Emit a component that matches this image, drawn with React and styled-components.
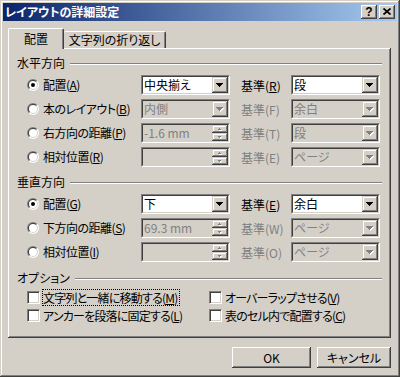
import React from "react"
import styled, { createGlobalStyle } from "styled-components"

const GlobalStyle = createGlobalStyle`
  html, body {
    margin: 0;
    padding: 0;
    background: #d4d0c8;
  }
  body {
    font-family: "Noto Sans CJK JP", "Liberation Sans", sans-serif;
    font-size: 12px;
    font-feature-settings: "palt";
    color: #000;
  }
  * {
    box-sizing: border-box;
  }
`

const raised = `
  box-shadow: inset -1px -1px #404040, inset 1px 1px #fff,
    inset -2px -2px #808080, inset 2px 2px #d4d0c8;
`

const Window = styled.div`
  width: 400px;
  height: 377px;
  padding: 3px;
  background: #d4d0c8;
  box-shadow: inset -1px -1px #404040, inset 1px 1px #d4d0c8,
    inset -2px -2px #808080, inset 2px 2px #fff;
  display: flex;
  flex-direction: column;
`

const TitleBar = styled.div`
  height: 18px;
  display: flex;
  align-items: center;
  padding: 0 2px;
  background: linear-gradient(to right, #0a246a, #a6caf0);
  color: #fff;
  font-weight: bold;
  font-size: 12px;
`

const Title = styled.span`
  flex: 1;
  white-space: nowrap;
  line-height: 18px;
`

const CaptionButton = styled.div`
  width: 16px;
  height: 14px;
  margin-left: ${p => p.$gap || 0}px;
  background: #d4d0c8;
  ${raised}
  display: flex;
  align-items: center;
  justify-content: center;
  color: #000;
  font-family: "Liberation Sans", sans-serif;
  font-size: 12px;
  font-weight: bold;
  line-height: 14px;
  padding-bottom: 1px;
`

const Body = styled.div`
  flex: 1;
  display: flex;
  flex-direction: column;
  padding: 7px 6px 0 5px;
`

const Tabs = styled.div`
  display: flex;
  height: 21px;
  margin-bottom: -1px;
  position: relative;
  z-index: 1;
`

const Tab = styled.div`
  width: ${p => p.$width}px;
  height: ${p => (p.$active ? 21 : 17)}px;
  margin-top: ${p => (p.$active ? 0 : 3)}px;
  padding-top: ${p => (p.$active ? 3 : 1)}px;
  text-align: center;
  line-height: 14px;
  white-space: nowrap;
  background: #d4d0c8;
  border-top: 1px solid #fff;
  border-left: ${p => (p.$active ? "1px solid #fff" : "none")};
  border-right: 1px solid #404040;
  border-radius: 2px 2px 0 0;
  box-shadow: inset -1px 0 #808080;
`

const Panel = styled.div`
  height: 290px;
  padding: 8px 9px 0 9px;
  box-shadow: inset -1px -1px #404040, inset 1px 1px #fff, inset -2px -2px #808080;
  display: flex;
  flex-direction: column;
`

const GroupHead = styled.div`
  display: flex;
  align-items: center;
  height: 14px;
  gap: 5px;
  margin-top: ${p => p.$top || 0}px;
  line-height: 14px;
  white-space: nowrap;

  &::after {
    content: "";
    flex: 1;
    margin-top: 1px;
    border-top: 1px solid #808080;
    border-bottom: 1px solid #fff;
  }
`

const Rows = styled.div`
  display: flex;
  flex-direction: column;
  gap: 4px;
  margin-top: 5px;
  padding-left: 10px;
`

const Row = styled.div`
  display: grid;
  grid-template-columns: 114px 89px 61px 89px;
  align-items: center;
  height: 20px;
`

const Choice = styled.div`
  display: flex;
  align-items: center;
  gap: 4px;
  white-space: nowrap;
  line-height: 14px;
  letter-spacing: -0.5px;
`

const RefLabel = styled.div`
  padding-left: 11px;
  white-space: nowrap;
  color: ${p => (p.$disabled ? "#808080" : "#000")};
`

const Sunken = styled.div`
  width: 89px;
  height: 20px;
  border: 1px solid;
  border-color: #808080 #fff #fff #808080;
`

const FieldInner = styled.div`
  height: 18px;
  display: flex;
  border: 1px solid;
  border-color: #404040 #d4d0c8 #d4d0c8 #404040;
  background: ${p => (p.$disabled ? "#d4d0c8" : "#fff")};
`

const FieldText = styled.div`
  flex: 1;
  padding-left: 1px;
  line-height: 16px;
  white-space: nowrap;
  overflow: hidden;
  color: ${p => (p.$disabled ? "#808080" : "#000")};
`

const DropBtn = styled.div`
  width: 16px;
  height: 16px;
  background: #d4d0c8;
  box-shadow: inset -1px -1px #404040, inset 1px 1px #d4d0c8,
    inset -2px -2px #808080, inset 2px 2px #fff;
  display: flex;
  align-items: center;
  justify-content: center;
  padding-top: 1px;
`

const SpinCol = styled.div`
  width: 16px;
  display: flex;
  flex-direction: column;
`

const SpinBtn = styled.div`
  height: 8px;
  background: #d4d0c8;
  box-shadow: inset -1px -1px #404040, inset 1px 1px #d4d0c8,
    inset -2px -2px #808080, inset 2px 2px #fff;
  display: flex;
  align-items: center;
  justify-content: center;
`

const Checks = styled.div`
  display: grid;
  grid-template-columns: 182px auto;
  grid-auto-rows: 17px;
  row-gap: 1px;
  margin-top: 4px;
  padding-left: 10px;
`

const CheckItem = styled.div`
  display: flex;
  align-items: center;
  white-space: nowrap;
`

const CheckBox = styled.span`
  width: 13px;
  height: 13px;
  margin-right: 2px;
  border: 1px solid;
  border-color: #808080 #fff #fff #808080;
  box-shadow: inset 1px 1px #404040, inset -1px -1px #d4d0c8;
  background: #fff;
`

const CheckText = styled.span`
  line-height: 15px;
  padding: 0 2px 0 0;
  letter-spacing: -0.8px;
  border: 1px ${p => (p.$focus ? "dotted #000" : "solid transparent")};
`

const Buttons = styled.div`
  display: flex;
  justify-content: flex-end;
  gap: 6px;
  margin-top: 9px;
`

const PushButton = styled.div`
  width: ${p => p.$width}px;
  height: 21px;
  background: #d4d0c8;
  ${raised}
  display: flex;
  align-items: center;
  justify-content: center;
  line-height: 14px;
`

const Arrow = ({ up, size = 4, disabled }) => {
  const w = size * 2 - 1
  const rows = (dx, dy, fill) =>
    Array.from({ length: size }, (_, i) => {
      const r = up ? size - 1 - i : i
      return <rect key={fill + i} x={r + dx} y={i + dy} width={w - 2 * r} height={1} fill={fill} />
    })
  return (
    <svg width={w + 1} height={size + 1} shapeRendering="crispEdges">
      {disabled && rows(1, 1, "#fff")}
      {rows(0, 0, disabled ? "#808080" : "#000")}
    </svg>
  )
}

// half disc from bottom-left to top-right, through top-left (or the reverse)
const halfDisc = (r, fill, reverse) => {
  const k = r * 0.7071
  const a = `${6 - k} ${6 + k}`
  const b = `${6 + k} ${6 - k}`
  return <path key={fill + r} d={reverse ? `M${b}A${r} ${r} 0 0 1 ${a}Z` : `M${a}A${r} ${r} 0 0 1 ${b}Z`} fill={fill} />
}

const Radio = ({ checked }) => (
  <svg width="12" height="12" viewBox="0 0 12 12">
    {halfDisc(6, "#808080")}
    {halfDisc(6, "#fff", true)}
    {halfDisc(5, "#404040")}
    {halfDisc(5, "#d4d0c8", true)}
    <circle cx="6" cy="6" r="4" fill="#fff" />
    {checked && <circle cx="6" cy="6" r="2" fill="#000" />}
  </svg>
)

const Combo = ({ value, disabled }) => (
  <Sunken>
    <FieldInner $disabled={disabled}>
      <FieldText $disabled={disabled}>{value}</FieldText>
      <DropBtn>
        <Arrow disabled={disabled} />
      </DropBtn>
    </FieldInner>
  </Sunken>
)

const Spin = ({ value }) => (
  <Sunken>
    <FieldInner $disabled>
      <FieldText $disabled>{value}</FieldText>
      <SpinCol>
        <SpinBtn>
          <Arrow up size={2} disabled />
        </SpinBtn>
        <SpinBtn>
          <Arrow size={2} disabled />
        </SpinBtn>
      </SpinCol>
    </FieldInner>
  </Sunken>
)

const horizontal = [
  { label: <>配置(<u>A</u>)</>, checked: true, combo: "中央揃え", ref: <>基準(<u>R</u>)</>, refValue: "段" },
  { label: <>本のレイアウト(<u>B</u>)</>, combo: "内側", off: true, ref: "基準(F)", refOff: true, refValue: "余白" },
  { label: <>右方向の距離(<u>P</u>)</>, spin: "-1.6 mm", ref: "基準(T)", refOff: true, refValue: "段" },
  { label: <>相対位置(<u>R</u>)</>, spin: "", ref: "基準(E)", refOff: true, refValue: "ページ" },
]

const vertical = [
  { label: <>配置(<u>G</u>)</>, checked: true, combo: "下", ref: <>基準(<u>E</u>)</>, refValue: "余白" },
  { label: <>下方向の距離(<u>S</u>)</>, spin: "69.3 mm", ref: "基準(W)", refOff: true, refValue: "ページ" },
  { label: <>相対位置(<u>I</u>)</>, spin: "", ref: "基準(O)", refOff: true, refValue: "ページ" },
]

const options = [
  { label: <>文字列と一緒に移動する(<u>M</u>)</>, focus: true },
  { label: <>オーバーラップさせる(<u>V</u>)</> },
  { label: <>アンカーを段落に固定する(<u>L</u>)</> },
  { label: <>表のセル内で配置する(<u>C</u>)</> },
]

const PositionRows = ({ rows }) => (
  <Rows>
    {rows.map((r, i) => (
      <Row key={i}>
        <Choice>
          <Radio checked={r.checked} />
          <span>{r.label}</span>
        </Choice>
        {r.spin !== undefined ? <Spin value={r.spin} /> : <Combo value={r.combo} disabled={r.off} />}
        <RefLabel $disabled={r.refOff}>{r.ref}</RefLabel>
        <Combo value={r.refValue} disabled={r.refOff} />
      </Row>
    ))}
  </Rows>
)

const App = () => {
  return (
    <Window>
      <GlobalStyle />
      <TitleBar>
        <Title>レイアウトの詳細設定</Title>
        <CaptionButton>?</CaptionButton>
        <CaptionButton $gap={2}>
          <svg width="8" height="7" viewBox="0 0 8 7">
            <path d="M0.5 0.5L7.5 6.5M7.5 0.5L0.5 6.5" stroke="#000" strokeWidth="1.7" />
          </svg>
        </CaptionButton>
      </TitleBar>
      <Body>
        <Tabs>
          <Tab $active $width={56}>配置</Tab>
          <Tab $width={102}>文字列の折り返し</Tab>
        </Tabs>
        <Panel>
          <GroupHead>水平方向</GroupHead>
          <PositionRows rows={horizontal} />
          <GroupHead $top={8}>垂直方向</GroupHead>
          <PositionRows rows={vertical} />
          <GroupHead $top={9}>オプション</GroupHead>
          <Checks>
            {options.map((o, i) => (
              <CheckItem key={i}>
                <CheckBox />
                <CheckText $focus={o.focus}>{o.label}</CheckText>
              </CheckItem>
            ))}
          </Checks>
        </Panel>
        <Buttons>
          <PushButton $width={79}>OK</PushButton>
          <PushButton $width={74}>キャンセル</PushButton>
        </Buttons>
      </Body>
    </Window>
  )
}

export default App
